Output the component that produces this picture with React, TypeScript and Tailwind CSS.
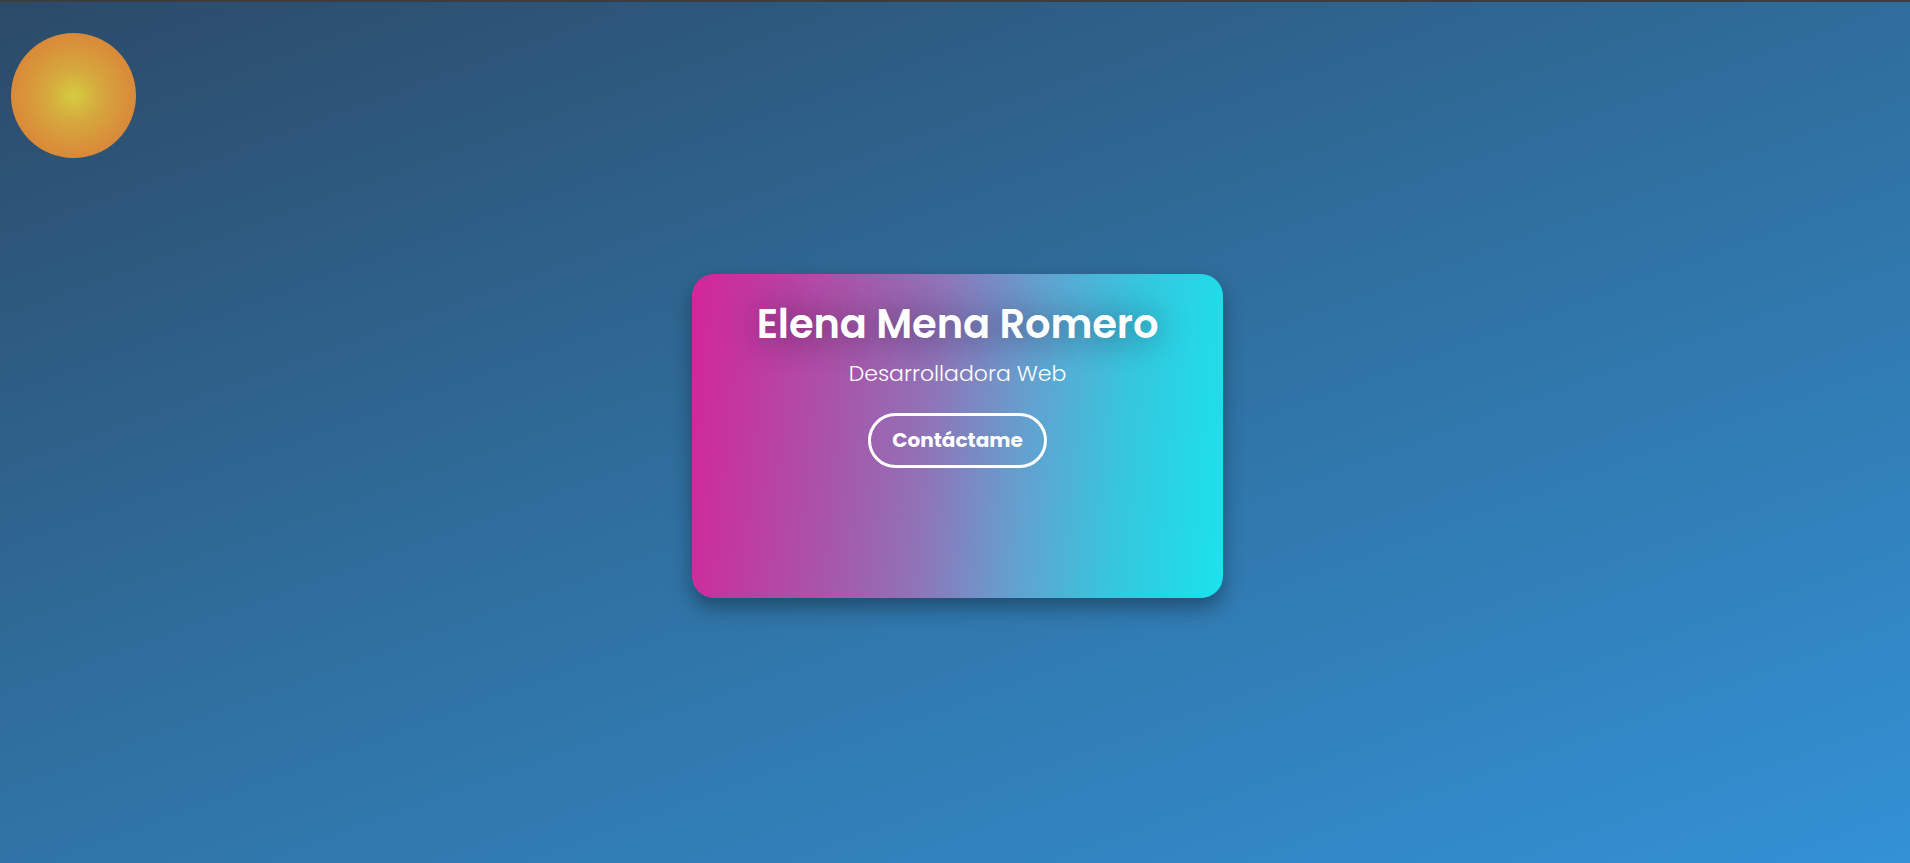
import React from "react";

export default function App() {
  return (
    <div
      className="relative w-full h-[863px] overflow-hidden flex flex-col"
      style={{ fontFamily: "Poppins, Inter, 'Noto Sans', sans-serif" }}
    >
      <div className="h-[2px] bg-[#3b3d40] shrink-0" />
      <div className="flex-1 flex items-center justify-center pl-[5px] pt-[6px] bg-[linear-gradient(160deg,#2c4a68_0%,#2f6d9c_45%,#3391d5_100%)]">
        <div className="absolute left-[11px] top-[33px] w-[125px] h-[125px] rounded-full bg-[radial-gradient(circle_at_50%_50%,#d4cc40_0%,#d6a83e_30%,#d98f39_62%,#d6773a_100%)]" />
        <div className="w-[531px] h-[324px] rounded-[22px] bg-[linear-gradient(95deg,#d3259a_0%,#a855a9_28%,#8f74b8_45%,#64a0cf_62%,#36c6de_80%,#1ae3eb_100%)] shadow-[0_10px_20px_rgba(0,0,0,0.35)] flex flex-col items-center pt-[23px] text-white">
          <h1 className="text-[40px] leading-[54px] font-semibold tracking-[-0.1px] [text-shadow:0_2px_30px_rgba(40,20,60,0.55)]">
            Elena Mena Romero
          </h1>
          <p className="mt-[8px] text-[22px] leading-[30px] font-light">Desarrolladora Web</p>
          <button className="mt-[24px] h-[55px] px-[21px] rounded-full border-[3px] border-white text-[20px] font-bold">
            Contáctame
          </button>
        </div>
      </div>
    </div>
  );
}
